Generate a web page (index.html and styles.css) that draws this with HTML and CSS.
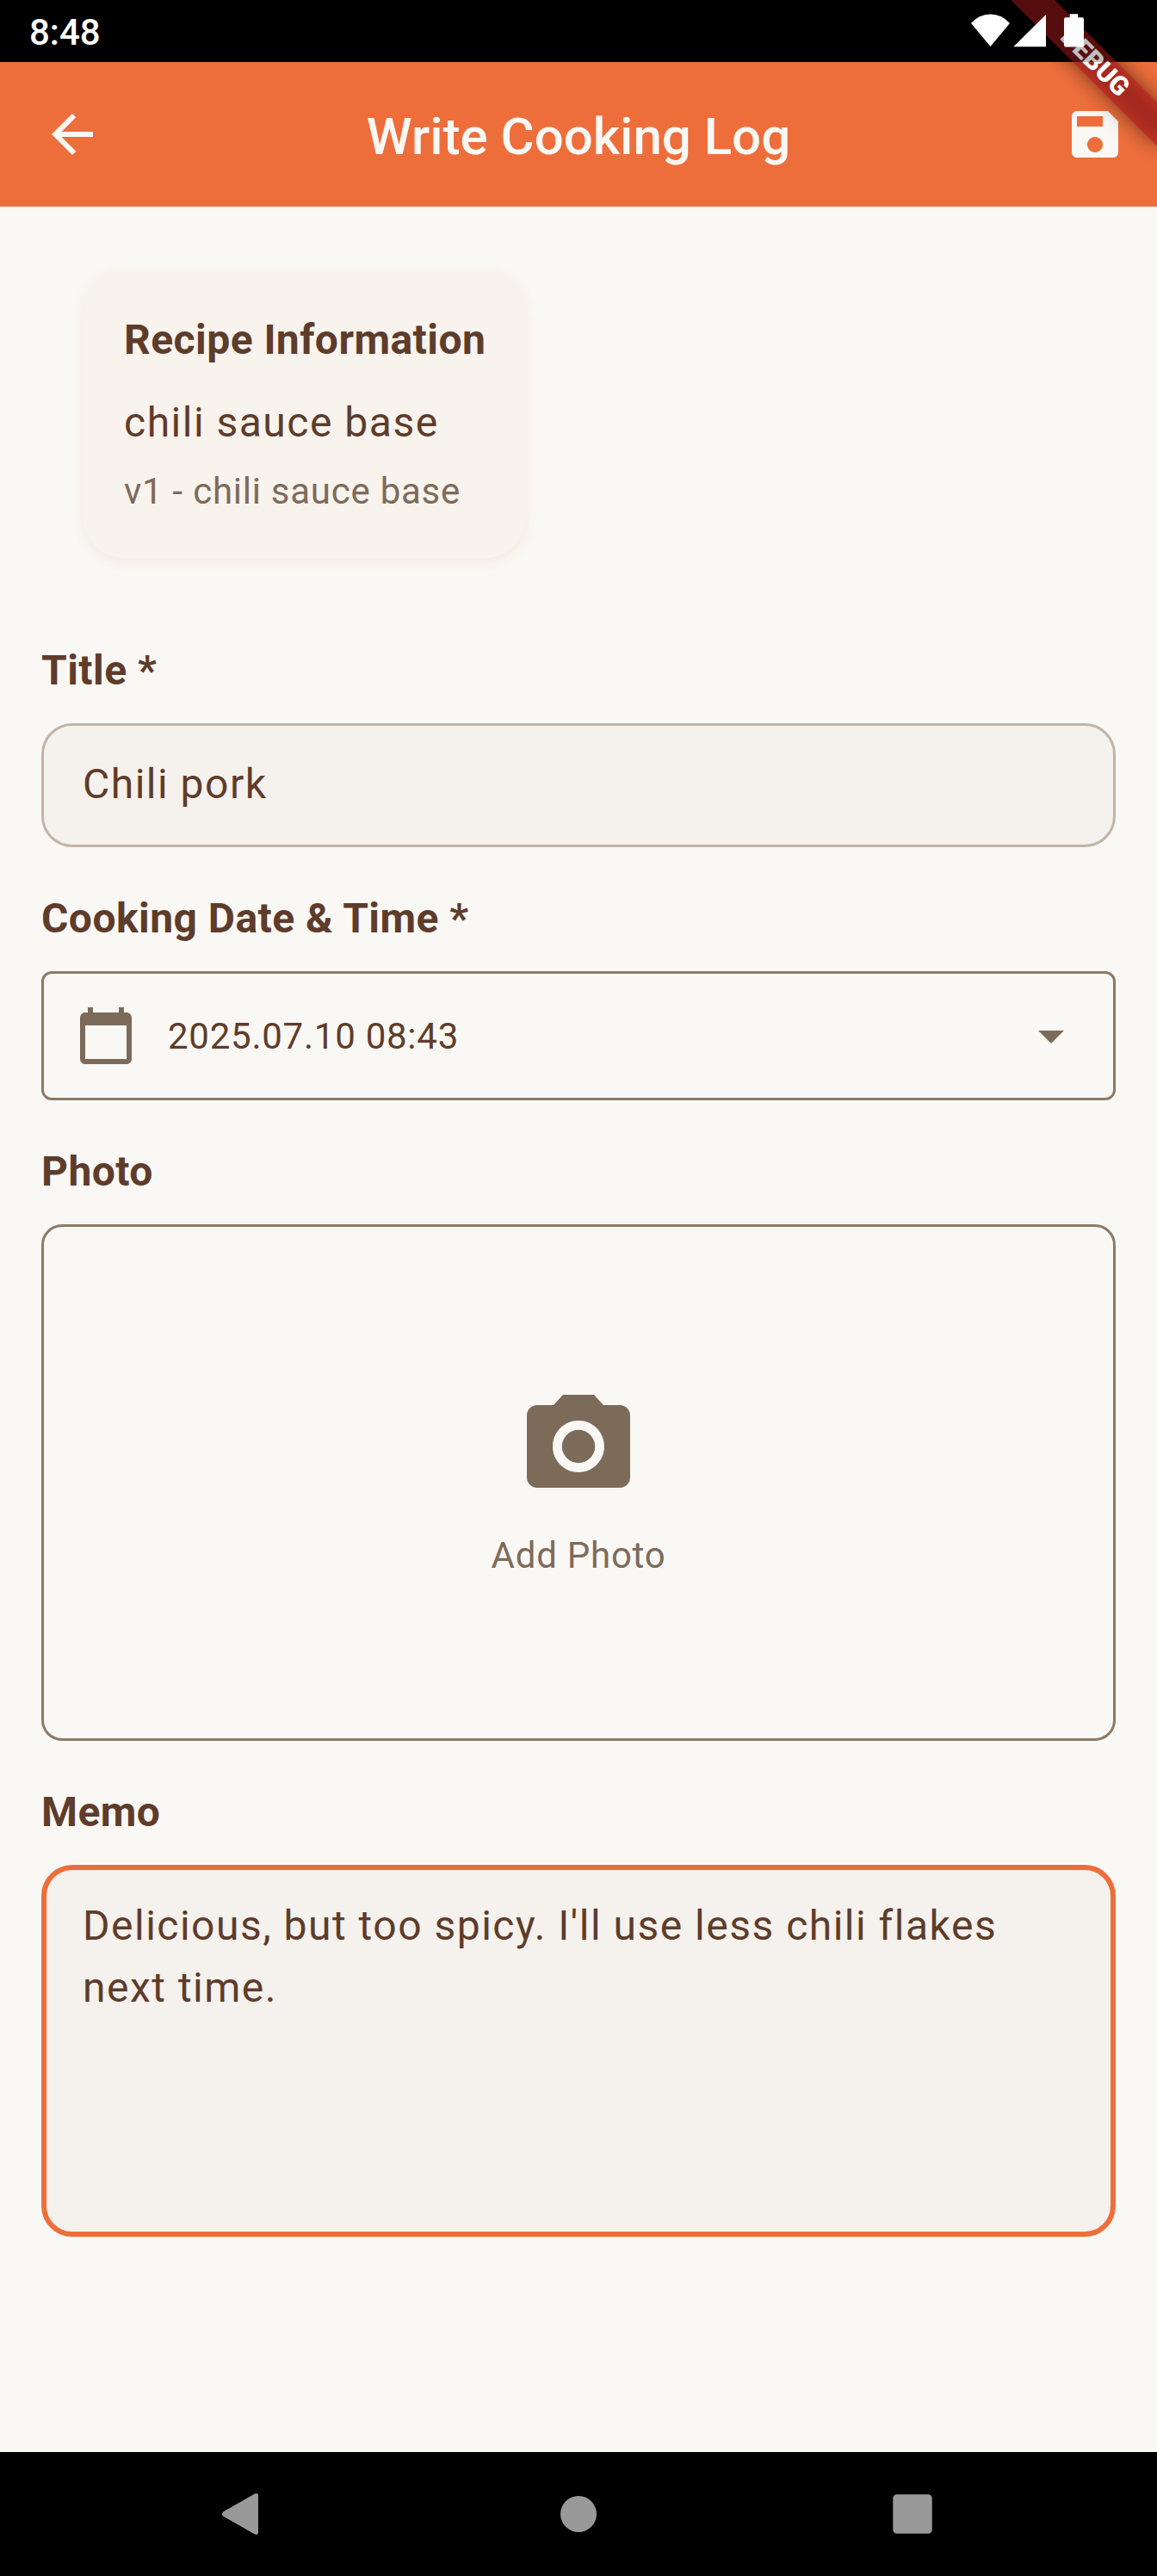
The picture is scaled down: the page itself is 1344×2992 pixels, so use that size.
FILE: index.html
```html
<!DOCTYPE html>
<html lang="en">
<head>
<meta charset="utf-8">
<title>Write Cooking Log</title>
<link rel="stylesheet" href="styles.css">
</head>
<body>
<div class="screen">
  <div class="banner-clip">
    <div class="banner-shadow"></div>
    <div class="banner">DEBUG</div>
  </div>
  <header class="status-bar">
    <span class="clock">8:48</span>
    <svg class="status-icons" viewBox="0 0 136 72">
      <path d="M1 27Q10 16.500 23.500 16.500Q37 16.500 46 27L23.500 54Z"/>
      <path d="M50.300 54.300H88V17Z"/>
      <path d="M115.700 16.300h9.600v3.900h4.700q2 0 2 2v30.300q0 2-2 2h-19q-2 0-2-2v-30.300q0-2 2-2h4.700z"/>
    </svg>
  </header>
  <div class="app-bar">
    <svg class="icon" viewBox="0 0 24 24"><path d="M20 11H7.830l5.590-5.590L12 4l-8 8 8 8 1.410-1.410L7.830 13H20v-2z"/></svg>
    <h1 class="app-title">Write Cooking Log</h1>
    <svg class="icon" viewBox="0 0 24 24"><path d="M17 3H5c-1.110 0-2 .9-2 2v14c0 1.100.89 2 2 2h14c1.100 0 2-.9 2-2V7l-4-4zm-5 16c-1.660 0-3-1.340-3-3s1.340-3 3-3 3 1.340 3 3-1.340 3-3 3zm3-10H5V5h10v4z"/></svg>
  </div>
  <main class="content">
    <section class="recipe-card">
      <h2 class="label">Recipe Information</h2>
      <p class="recipe-name">chili sauce base</p>
      <p class="recipe-version">v1 - chili sauce base</p>
    </section>
    <section class="group">
      <h2 class="label">Title *</h2>
      <div class="field">Chili pork</div>
    </section>
    <section class="group">
      <h2 class="label">Cooking Date &amp; Time *</h2>
      <div class="date-field">
        <svg class="icon" viewBox="0 0 24 24"><path d="M20 3h-1V1h-2v2H7V1H5v2H4c-1.100 0-2 .9-2 2v16c0 1.100.9 2 2 2h16c1.100 0 2-.9 2-2V5c0-1.100-.9-2-2-2zm0 18H4V8h16v13z"/></svg>
        <span class="date-value">2025.07.10 08:43</span>
        <svg class="icon" viewBox="0 0 24 24"><path d="M7 10l5 5 5-5z"/></svg>
      </div>
    </section>
    <section class="group">
      <h2 class="label">Photo</h2>
      <div class="photo-box">
        <svg class="camera" viewBox="0 0 24 24"><circle cx="12" cy="12" r="3.200"/><path d="M9 2L7.170 4H4c-1.100 0-2 .9-2 2v12c0 1.100.9 2 2 2h16c1.100 0 2-.9 2-2V6c0-1.100-.9-2-2-2h-3.170L15 2H9zm3 15c-2.760 0-5-2.240-5-5s2.240-5 5-5 5 2.240 5 5-2.240 5-5 5z"/></svg>
        <span class="photo-text">Add Photo</span>
      </div>
    </section>
    <section class="group">
      <h2 class="label">Memo</h2>
      <div class="field memo">Delicious, but too spicy. I'll use less chili flakes next time.</div>
    </section>
  </main>
  <nav class="nav-bar">
    <svg class="nav-icon" viewBox="0 0 72 72"><path d="M52.500 12.700Q56 10.800 57 14V58Q56 61.200 52.500 59.300L16 38.500Q14 36 16 33.500Z"/></svg>
    <svg class="nav-icon" viewBox="0 0 72 72"><circle cx="36" cy="36" r="21"/></svg>
    <svg class="nav-icon" viewBox="0 0 72 72"><rect x="13.300" y="13.300" width="45.400" height="45.400" rx="4.500"/></svg>
  </nav>
</div>
</body>
</html>
```
FILE: styles.css
```css
* { box-sizing: border-box; }
body { margin: 0; }
h1, h2, p { margin: 0; }

.screen {
  position: relative;
  display: flex;
  flex-direction: column;
  width: 1344px;
  height: 2992px;
  background: #faf8f4;
  color: #5e3c2b;
  font-family: Roboto, sans-serif;
}

.status-bar {
  display: flex;
  justify-content: space-between;
  height: 72px;
  padding: 0 81px 0 34px;
  background: #000;
  color: #fff;
}
.clock {
  font-size: 42px;
  font-weight: 500;
  line-height: 76px;
}
.status-icons {
  position: relative;
  z-index: 2;
  width: 136px;
  height: 72px;
  fill: #fff;
}

/* Corner ribbon laid over the top right of the screen */
.banner-clip {
  position: absolute;
  z-index: 1;
  top: 0;
  right: 0;
  width: 300px;
  height: 300px;
  overflow: hidden;
}
.banner-clip::after {
  content: "";
  position: absolute;
  inset: 0 0 auto;
  height: 72px;
  background: rgba(0, 0, 0, 0.25);
}
.banner-shadow,
.banner {
  position: absolute;
  top: 84px;
  left: 180px;
  width: 240px;
  height: 36px;
  transform-origin: 120px -84px;
  transform: rotate(45deg);
}
.banner-shadow {
  background: rgba(0, 0, 0, 0.5);
  filter: blur(12px);
}
.banner {
  background: rgba(183, 28, 28, 0.627);
  color: #fff;
  font-size: 30.600px;
  font-weight: 900;
  line-height: 36px;
  text-align: center;
}

.app-bar {
  display: flex;
  align-items: center;
  justify-content: space-between;
  height: 168px;
  padding: 0 36px 0 48px;
  background: #ee6e3b;
  color: #faf8f4;
}
.icon {
  flex: none;
  width: 72px;
  height: 72px;
  fill: currentColor;
}
.app-title {
  margin-left: -12px;
  padding-top: 6px;
  font-size: 60px;
  font-weight: 500;
  line-height: 84px;
}

.content {
  display: flex;
  flex: 1;
  flex-direction: column;
  gap: 48px;
  padding: 72px 48px 0;
}
.recipe-card {
  display: flex;
  flex-direction: column;
  align-self: flex-start;
  height: 336px;
  margin: 0 0 48px 48px;
  padding: 48px;
  border-radius: 48px;
  background: #f8f3ed;
  box-shadow: 0 5px 14px rgba(160, 84, 50, 0.08);
}
.label {
  height: 72px;
  font-size: 48px;
  font-weight: 700;
  line-height: 70px;
  letter-spacing: 0.450px;
}
.recipe-name {
  height: 72px;
  margin-top: 24px;
  font-size: 48px;
  line-height: 70px;
  letter-spacing: 1.500px;
}
.recipe-version {
  height: 60px;
  margin-top: 12px;
  color: #7d6b5a;
  font-size: 42px;
  line-height: 62px;
  letter-spacing: 0.750px;
}
.group {
  display: flex;
  flex-direction: column;
  gap: 24px;
}
.field {
  height: 144px;
  padding: 32px 45px;
  border: 3px solid #c0b5a8;
  border-radius: 36px;
  background: #f5f1ec;
  font-size: 48px;
  line-height: 72px;
  letter-spacing: 1.500px;
}
.memo {
  height: 432px;
  padding: 29px 42px;
  border: 6px solid #ee6e3b;
}
.date-field {
  display: flex;
  align-items: center;
  gap: 36px;
  height: 150px;
  padding: 0 36px;
  border: 3px solid #8b7b68;
  border-radius: 12px;
  color: #7d6b5a;
}
.date-value {
  flex: 1;
  height: 60px;
  color: #5e3c2b;
  font-size: 42px;
  line-height: 62px;
  letter-spacing: 0.750px;
}
.photo-box {
  display: flex;
  flex-direction: column;
  align-items: center;
  justify-content: center;
  gap: 24px;
  height: 600px;
  border: 3px solid #8b7b68;
  border-radius: 24px;
  color: #7d6b5a;
}
.camera {
  width: 144px;
  height: 144px;
  fill: currentColor;
}
.photo-text {
  height: 60px;
  font-size: 42px;
  line-height: 62px;
  letter-spacing: 0.750px;
}

.nav-bar {
  display: flex;
  align-items: center;
  justify-content: space-between;
  height: 144px;
  padding: 0 248px 0 243px;
  background: #000;
}
.nav-icon {
  width: 72px;
  height: 72px;
  fill: #999;
}
.nav-icon:nth-child(2) {
  margin-left: 5px;
}
```
